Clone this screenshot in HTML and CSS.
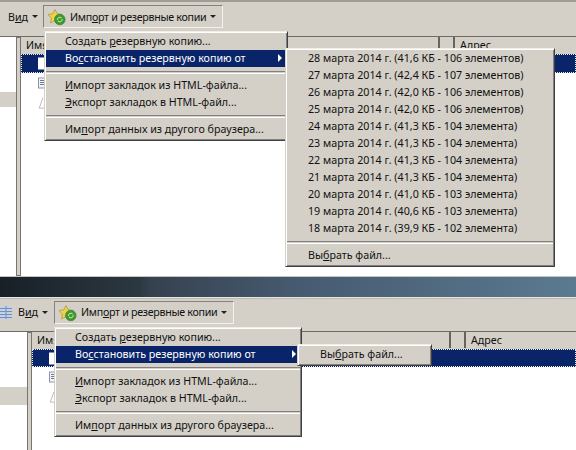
FILE: index.html
```html
<!DOCTYPE html>
<html lang="ru">
<head>
<meta charset="utf-8">
<title>Библиотека</title>
<link rel="stylesheet" href="styles.css">
</head>
<body>
<svg class="defs" width="0" height="0" aria-hidden="true">
  <symbol id="star" viewBox="0 0 19 19">
    <path d="M7 2.500l2.200 4.300 5.100 .7-3.700 3.500 .9 5-4.500-2.400-4.500 2.400 .9-5-3.700-3.500 5.100-.7z" fill="#ecd24a" stroke="#b09a3c" stroke-width=".8"/>
    <circle cx="11.800" cy="12.500" r="5.300" fill="#3f9a2e" stroke="#2f7a24" stroke-width=".6"/>
    <path d="M9.300 12.800a2.600 2.600 0 0 1 4.400-1.800M14.300 12.200a2.600 2.600 0 0 1-4.400 1.800" fill="none" stroke="#d8efc8" stroke-width="1"/>
  </symbol>
</svg>

<section class="pane pane-a">
  <div class="toolbar">
    <span class="tool tool-view"><span>В<u>и</u>д</span><i class="caret"></i></span>
    <span class="tool tool-open"><svg class="star"><use href="#star"/></svg><span class="tool-label">Имп<u>о</u>рт и резервные копии</span><i class="caret"></i></span>
  </div>
  <div class="body">
    <div class="tree"><div class="tree-row"></div></div>
    <div class="splitter"></div>
    <div class="list">
      <div class="head"><span class="col-name">Имя</span><span class="col-mid"></span><span class="col-addr">Адрес</span></div>
      <div class="row-sel"><svg class="ico" viewBox="0 0 8 12"><rect width="8" height="12" fill="#fff"/></svg></div>
      <div class="row"><svg class="ico" viewBox="0 0 8 12"><rect x=".5" y=".5" width="7" height="10" fill="#f4f4f4" stroke="#8a94a6"/><path d="M2 3h4M2 5h4M2 7h4" stroke="#6a7a9a"/></svg></div>
      <div class="row"><svg class="ico" viewBox="0 0 8 14"><path d="M5 1L1 12h7" fill="#fff" stroke="#b8b8b0"/></svg></div>
    </div>
  </div>
  <div class="menu menu-main">
    <div class="item">Создать <u>р</u>езервную копию...</div>
    <div class="item item-on">Во<u>с</u>становить резервную копию от<i class="arrow"></i></div>
    <div class="sep"></div>
    <div class="item"><u>И</u>мпорт закладок из HTML-файла...</div>
    <div class="item"><u>Э</u>кспорт закладок в HTML-файл...</div>
    <div class="sep"></div>
    <div class="item">Им<u>п</u>орт данных из другого браузера...</div>
  </div>
  <div class="menu menu-sub">
    <div class="item">28 марта 2014 г. (41,6 КБ - 106 элементов)</div>
    <div class="item">27 марта 2014 г. (42,4 КБ - 107 элементов)</div>
    <div class="item">26 марта 2014 г. (42,0 КБ - 106 элементов)</div>
    <div class="item">25 марта 2014 г. (42,0 КБ - 106 элементов)</div>
    <div class="item">24 марта 2014 г. (41,3 КБ - 104 элемента)</div>
    <div class="item">23 марта 2014 г. (41,3 КБ - 104 элемента)</div>
    <div class="item">22 марта 2014 г. (41,3 КБ - 104 элемента)</div>
    <div class="item">21 марта 2014 г. (41,3 КБ - 104 элемента)</div>
    <div class="item">20 марта 2014 г. (41,0 КБ - 103 элемента)</div>
    <div class="item">19 марта 2014 г. (40,6 КБ - 103 элемента)</div>
    <div class="item">18 марта 2014 г. (39,9 КБ - 102 элемента)</div>
    <div class="sep"></div>
    <div class="item">Вы<u>б</u>рать файл...</div>
  </div>
</section>

<div class="band"></div>

<section class="pane pane-b">
  <div class="toolbar">
    <svg class="grid" viewBox="0 0 12 13"><rect width="12" height="13" fill="#c4d2e4"/><path d="M0 2.500h12M0 5.500h12M0 8.500h12M0 11.500h12M6 0v13" stroke="#6f8fc0"/></svg>
    <span class="tool tool-view"><span>В<u>и</u>д</span><i class="caret"></i></span>
    <span class="tool tool-open"><svg class="star"><use href="#star"/></svg><span class="tool-label">Имп<u>о</u>рт и резервные копии</span><i class="caret"></i></span>
  </div>
  <div class="body">
    <div class="tree"><div class="tree-row"></div></div>
    <div class="splitter"></div>
    <div class="list">
      <div class="head"><span class="col-name">Имя</span><span class="col-mid"></span><span class="col-addr">Адрес</span></div>
      <div class="row-sel"><svg class="ico" viewBox="0 0 8 12"><rect width="8" height="12" fill="#fff"/></svg></div>
      <div class="row"><svg class="ico" viewBox="0 0 8 12"><rect x=".5" y=".5" width="7" height="10" fill="#f4f4f4" stroke="#8a94a6"/><path d="M2 3h4M2 5h4M2 7h4" stroke="#6a7a9a"/></svg></div>
      <div class="row"><svg class="ico" viewBox="0 0 8 14"><path d="M5 1L1 12h7" fill="#fff" stroke="#b8b8b0"/></svg></div>
    </div>
  </div>
  <div class="menu menu-main">
    <div class="item">Создать <u>р</u>езервную копию...</div>
    <div class="item item-on">Во<u>с</u>становить резервную копию от<i class="arrow"></i></div>
    <div class="sep"></div>
    <div class="item"><u>И</u>мпорт закладок из HTML-файла...</div>
    <div class="item"><u>Э</u>кспорт закладок в HTML-файл...</div>
    <div class="sep"></div>
    <div class="item">Им<u>п</u>орт данных из другого браузера...</div>
  </div>
  <div class="menu menu-sub">
    <div class="item">Вы<u>б</u>рать файл...</div>
  </div>
</section>
</body>
</html>
```
FILE: styles.css
```css
html, body {
  margin: 0;
  padding: 0;
}
body {
  width: 576px;
  height: 450px;
  overflow: hidden;
  background: #fff;
  color: #111;
  font: 10.7px/16px "Noto Sans", "Liberation Sans", sans-serif;
}
u { text-underline-offset: 1px; }
i { font-style: normal; }
.defs { position: absolute; }

.pane {
  position: relative;
  overflow: hidden;
  display: flex;
  flex-direction: column;
}
.pane-a {
  height: 276px;
  border-bottom: 1px solid #c8c4bc;
}
.pane-b {
  height: 152px;
  border-top: 1px solid #bdbab2;
}

.toolbar {
  display: flex;
  align-items: center;
  background: #d4d0c8;
  border-bottom: 1px solid #6e6c66;
  box-sizing: border-box;
}
.pane-a .toolbar {
  height: 37px;
  border-top: 2px solid #a09d96;
  padding: 0 0 5px 8px;
}
.pane-b .toolbar {
  height: 33px;
  padding: 0 0 6px 0;
}
.grid {
  flex: none;
  width: 12px;
  height: 13px;
  margin-right: 6px;
}
.tool {
  flex: none;
  display: flex;
  align-items: center;
  gap: 4px;
  white-space: nowrap;
}
.tool-view {
  width: 26px;
  margin-right: 9px;
}
.pane-b .tool-view { margin-right: 10px; }
.tool-open {
  height: 23px;
  box-sizing: border-box;
  width: 180px;
  padding-left: 4px;
  border: 1px solid;
  border-color: #85827b #f4f2ee #f4f2ee #85827b;
}
.tool-label { letter-spacing: -.3px; }
.star {
  flex: none;
  width: 19px;
  height: 19px;
  margin-right: -1px;
}
.caret {
  flex: none;
  width: 0;
  height: 0;
  border: 3px solid transparent;
  border-top-color: #222;
  border-bottom: 0;
}

.body {
  flex: 1;
  display: flex;
  min-height: 0;
}
.tree { background: #fff; }
.pane-a .tree { width: 16px; padding-top: 55px; }
.pane-b .tree { width: 27px; padding-top: 55px; }
.tree-row {
  background: #d4d0c8;
  height: 15px;
}
.pane-b .tree-row { height: 18px; }
.splitter {
  width: 3px;
  background: #d4d0c8;
  border: 1px solid #77756f;
}
.list {
  flex: 1;
  min-width: 0;
  background: #fff;
}
.head {
  display: flex;
  height: 16px;
  background: #d4d0c8;
  border-bottom: 1px solid #d4d0c8;
  line-height: 17px;
}
.col-name {
  box-sizing: border-box;
  width: 419px;
  padding-left: 5px;
  border-right: 2px solid #66645f;
}
.col-mid {
  width: 13px;
  border-right: 2px solid #66645f;
}
.col-addr { padding-left: 5px; }
.row-sel {
  height: 19px;
  box-sizing: border-box;
  background: #0a246a;
  border: 1px dotted #e8e8e8;
  padding-left: 16px;
  display: flex;
  align-items: center;
}
.pane-b .row-sel { height: 18px; }
.row {
  height: 20px;
  padding-left: 17px;
  display: flex;
  align-items: center;
}
.ico {
  width: 8px;
  height: 13px;
}

.menu {
  position: absolute;
  box-sizing: border-box;
  background: #d4d0c8;
  padding: 1px 1px 2px;
  border: 1px solid;
  border-color: #f0eee8 #404040 #404040 #d4d0c8;
  box-shadow: inset 1px 1px 0 #fff, inset -1px -1px 0 #808080;
}
.item {
  position: relative;
  height: 17px;
  padding-left: 19px;
  white-space: nowrap;
}
.item-on {
  background: #0a246a;
  color: #fff;
}
.arrow {
  position: absolute;
  right: 4px;
  top: 4px;
  border: 4px solid transparent;
  border-left: 4px solid #fff;
  border-right: 0;
}
.sep {
  height: 10px;
  box-sizing: border-box;
  padding-top: 4px;
}
.sep::before {
  content: "";
  display: block;
  height: 1px;
  border-top: 1px solid #808080;
  border-bottom: 1px solid #fff;
}
.pane-a .menu-main {
  left: 44px;
  top: 31px;
  width: 244px;
  height: 110px;
}
.pane-a .menu-sub {
  left: 285px;
  top: 48px;
  width: 270px;
  height: 219px;
}
.pane-a .menu-sub .item { padding-left: 21px; }
.pane-b .menu-main {
  left: 54px;
  top: 28px;
  width: 248px;
  height: 110px;
}
.pane-b .menu-sub {
  left: 297px;
  top: 45px;
  width: 135px;
  height: 22px;
}
.pane-b .menu-sub .item { padding-left: 21px; }

.band {
  height: 20px;
  background: linear-gradient(90deg, #172027 0, #2c3841 140px, #36414f 150px, #45596f 288px, #5b7a90 576px);
  border-bottom: 1px solid #e6e6e2;
}
```
